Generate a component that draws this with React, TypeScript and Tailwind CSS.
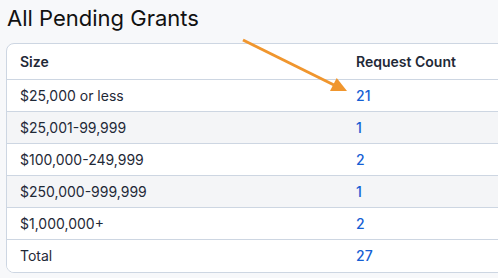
const ROWS: [string, string][] = [
  ['$25,000 or less', '21'],
  ['$25,001-99,999', '1'],
  ['$100,000-249,999', '2'],
  ['$250,000-999,999', '1'],
  ['$1,000,000+', '2'],
]

export default function App() {
  return (
    <div className="relative h-[278px] w-[498px] overflow-hidden bg-[#f7f8fa] font-['Inter',sans-serif]">
      <h1 className="px-[7px] pt-[3px] text-[22px] leading-[30px] text-[#111]">All Pending Grants</h1>

      {/* Table card */}
      <div className="ml-[6px] mt-[10px] w-[540px] overflow-hidden rounded-[8px] border border-[#cdd6e2] bg-white">
        <table className="w-full border-collapse text-[14px] text-[#1f2937]">
          <thead>
            <tr className="h-[35px] border-b border-[#cdd6e2]">
              <th className="w-[336px] pl-[13px] text-left font-semibold">Size</th>
              <th className="pl-[13px] text-left font-semibold">Request Count</th>
            </tr>
          </thead>
          <tbody>
            {ROWS.map(([size, count], i) => (
              <tr
                key={size}
                className={`h-[32px] border-b border-[#cdd6e2] ${i % 2 === 1 ? 'bg-[#f4f5f7]' : 'bg-white'}`}
              >
                <td className="pl-[13px]">{size}</td>
                <td className="pl-[13px] font-medium text-[#1560d4]">{count}</td>
              </tr>
            ))}
          </tbody>
          <tfoot>
            <tr className="h-[33px] bg-white">
              <td className="pl-[13px]">Total</td>
              <td className="pl-[13px] font-medium text-[#1560d4]">27</td>
            </tr>
          </tfoot>
        </table>
      </div>

      {/* Annotation arrow */}
      <svg className="absolute left-0 top-0" width="498" height="278">
        <line x1="243" y1="40" x2="336" y2="86" stroke="#f0962e" strokeWidth="3" />
        <polygon points="336.7,78 347,91 330,91" fill="#f0962e" />
      </svg>
    </div>
  )
}
